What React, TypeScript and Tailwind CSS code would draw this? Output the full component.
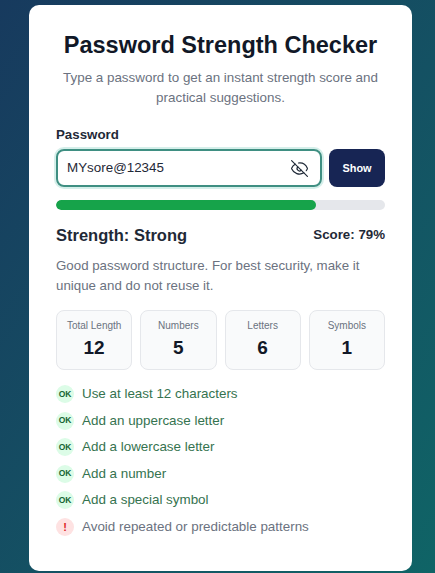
import { EyeOff } from "lucide-react"

const stats = [
  { label: "Total Length", value: 12 },
  { label: "Numbers", value: 5 },
  { label: "Letters", value: 6 },
  { label: "Symbols", value: 1 },
]

const rules = [
  { text: "Use at least 12 characters", ok: true },
  { text: "Add an uppercase letter", ok: true },
  { text: "Add a lowercase letter", ok: true },
  { text: "Add a number", ok: true },
  { text: "Add a special symbol", ok: true },
  { text: "Avoid repeated or predictable patterns", ok: false },
]

export default function App() {
  return (
    <div className="h-[573px] overflow-hidden bg-gradient-to-br from-[#173a5e] to-[#0f6466] flex pl-[29px] pt-[5px] font-[family-name:'Liberation_Sans',Arial,sans-serif]">
      <div className="w-[383px] h-[566px] bg-white rounded-[10px] px-[27px] pt-[25px]">
        <h1 className="text-[23.5px] leading-[30px] font-bold text-[#111827] text-center whitespace-nowrap">
          Password Strength Checker
        </h1>
        <p className="mt-[8px] text-[13.4px] leading-[20px] text-[#6b7280] text-center">
          Type a password to get an instant strength score and practical suggestions.
        </p>

        <label className="block mt-[17px] text-[13.3px] leading-[20px] font-bold text-[#1f2937]">Password</label>
        <div className="mt-[4px] flex gap-[7px]">
          <div className="flex-1 h-[38px] flex items-center justify-between rounded-[8px] border-2 border-[#3f8f82] shadow-[0_0_0_2px_#d5efea] pl-[9px] pr-[11px]">
            <span className="text-[13.4px] text-[#1f2937]">MYsore@12345</span>
            <EyeOff size={19} strokeWidth={1.5} className="text-[#1f2937]" />
          </div>
          <button className="w-[56px] h-[38px] rounded-[8px] bg-[#172554] text-white text-[10.9px] font-bold">
            Show
          </button>
        </div>

        <div className="mt-[13px] h-[10px] rounded-full bg-[#e5e7eb] overflow-hidden">
          <div className="h-full rounded-full bg-[#16a34a]" style={{ width: "79%" }} />
        </div>

        <div className="mt-[14px] flex items-center justify-between">
          <span className="text-[16.5px] leading-[22px] font-bold text-[#1f2937]">Strength: Strong</span>
          <span className="text-[13.3px] font-bold text-[#1f2937]">Score: 79%</span>
        </div>
        <p className="mt-[9.5px] text-[13.3px] leading-[20px] text-[#6b7280]">
          Good password structure. For best security, make it unique and do not reuse it.
        </p>

        <div className="mt-[14.5px] grid grid-cols-4 gap-[8px]">
          {stats.map(s => (
            <div key={s.label} className="h-[60px] rounded-[8px] border border-[#e5e7eb] bg-[#f9fafb] flex flex-col items-center pt-[8px]">
              <span className="text-[10px] leading-[14px] text-[#6b7280] whitespace-nowrap">{s.label}</span>
              <span className="mt-[3px] text-[19px] leading-[24px] font-bold text-[#111827]">{s.value}</span>
            </div>
          ))}
        </div>

        <ul className="mt-[15px] flex flex-col gap-[8.6px]">
          {rules.map(r => (
            <li key={r.text} className="flex items-center gap-[8px] h-[18px]">
              <span
                className={`w-[18px] h-[18px] rounded-full flex items-center justify-center font-bold ${
                  r.ok ? "bg-[#dcfce7] text-[#166534] text-[8.5px]" : "bg-[#fee2e2] text-[#dc2626] text-[11px]"
                }`}
              >
                {r.ok ? "OK" : "!"}
              </span>
              <span className={`text-[13.4px] ${r.ok ? "text-[#35734f]" : "text-[#6b7280]"}`}>{r.text}</span>
            </li>
          ))}
        </ul>
      </div>
    </div>
  )
}
